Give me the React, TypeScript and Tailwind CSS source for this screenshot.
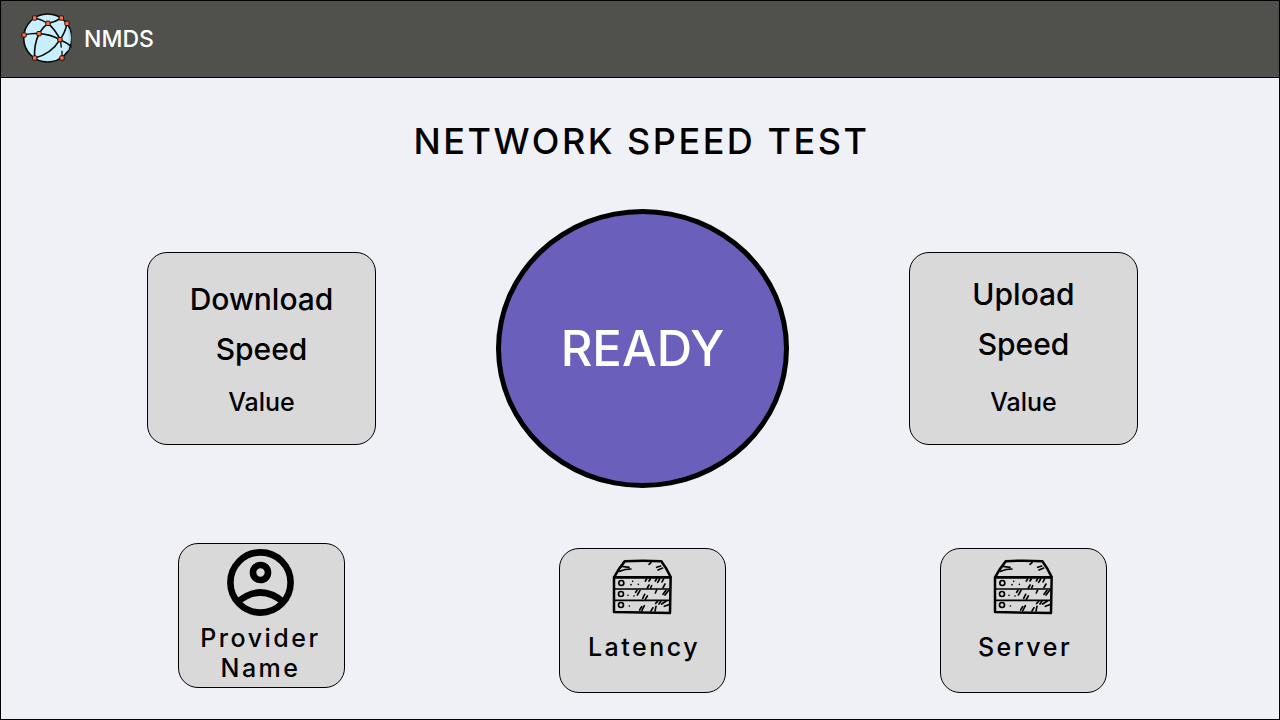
import React from "react";

function GlobeLogo() {
  const nodes = [
    [59, 39],
    [139, 39],
    [156, 55],
    [99, 55],
    [27, 90],
    [72, 86],
    [135, 104],
    [59, 159],
    [141, 159],
  ];
  return (
    <svg viewBox="18 18 156 156" className="size-[52px] shrink-0" aria-hidden="true">
      <clipPath id="globe-edge">
        <rect x="18" y="18" width="152" height="156" />
      </clipPath>
      <g clipPath="url(#globe-edge)" fill="none" stroke="#0a0a0a" strokeWidth="5">
        <circle cx="98" cy="99" r="72" fill="#c8effe" />
        <path d="M163 72Q172 100 161 134L154 140Q166 105 158 76Z" fill="#a9e4fb" stroke="none" />
        <path d="M59 39Q80 43 99 55Q121 51 139 39" />
        <path d="M27 90Q48 84 72 86Q82 67 99 55" />
        <path d="M72 86Q106 88 135 104Q155 112 172 127" />
        <path d="M72 86Q56 120 59 159Q108 148 135 104" />
        <path d="M99 55Q123 76 135 104Q151 82 156 55" />
        <path d="M137 110L139 128M141 137V156" strokeWidth="4" />
      </g>
      {nodes.map(([x, y]) => (
        <rect key={`${x}-${y}`} x={x - 6.5} y={y - 6.5} width="13" height="13" rx="3" fill="#ff7049" stroke="#1c0d08" strokeWidth="3" />
      ))}
    </svg>
  );
}

function AccountIcon() {
  return (
    <svg viewBox="0 0 67 67" className="size-[67px]" fill="none" stroke="#000" strokeWidth="6.6" aria-hidden="true">
      <circle cx="33.5" cy="33.5" r="30.1" />
      <circle cx="33.5" cy="23.5" r="7.5" />
      <path d="M10 53.5Q33.5 33.5 57 53.5" />
    </svg>
  );
}

function ServerIcon() {
  return (
    <svg viewBox="37 28 183 171" className="h-[57px] w-[61px]" fill="none" stroke="#000" strokeLinecap="round" strokeLinejoin="round" aria-hidden="true">
      <path d="M43 83Q56 58 75 35Q130 31 185 35Q201 56 213 82L211 190Q130 189 43 187Z" strokeWidth="7.5" />
      <path d="M45 83H211" strokeWidth="8" />
      <path d="M46 118H210M46 152H210" strokeWidth="5" />
      <g strokeWidth="5">
        <circle cx="65" cy="100" r="7.5" />
        <circle cx="64" cy="133" r="7.5" />
        <circle cx="64" cy="166" r="7.5" />
      </g>
      <path d="M99 95h.1M94 105h.1M116 104h.1M85 137h.1M103 139h.1M89 169h.1" strokeWidth="5" />
      <path
        d="M67 50L88 53M60 65Q76 58 94 58M154 39L148 44M171 53L183 49M175 61L189 55
        M137 94L141 88M148 94L152 88M171 87L167 94M180 88L174 98M192 87L187 97M148 106L143 115M156 108L153 115M196 103L190 114
        M108 128L112 122M121 122L113 136M135 134L129 146M143 139L137 149M171 121L167 130M199 122L190 134M207 122L196 136
        M126 171L120 181M134 168L126 184M160 174L154 184M169 170L166 184M174 155L168 161M184 154L178 163M200 154L186 163M207 165L194 170"
        strokeWidth="5"
      />
    </svg>
  );
}

function SpeedCard({ name, textClass, valueClass }: { name: string; textClass: string; valueClass: string }) {
  return (
    <section className={`h-[193px] w-[229px] rounded-[20px] border border-black bg-[#d9d9d9] px-8 text-center ${textClass}`}>
      <h2 className="text-[30px] leading-[50px]">{name} Speed</h2>
      <p className={`text-[25px] leading-[30px] ${valueClass}`}>Value</p>
    </section>
  );
}

function InfoCard({ label, icon, className, labelClass }: { label: string; icon: React.ReactNode; className: string; labelClass?: string }) {
  return (
    <section className={`flex h-[145px] w-[167px] flex-col items-center rounded-[20px] border border-black bg-[#d9d9d9] text-center ${className}`}>
      {icon}
      <h2 className={`text-[25px] leading-[30px] tracking-[2.5px] ${labelClass ?? ""}`}>{label}</h2>
    </section>
  );
}

export default function App() {
  return (
    <div className="flex min-h-screen flex-col border border-black bg-[#f0f1f6] font-['Inter','Liberation_Sans',sans-serif] font-medium text-black">
      <header className="flex h-[77px] items-center gap-[11px] border-b border-black bg-[#50504d] px-5 pb-1">
        <GlobeLogo />
        <span className="pt-1 text-[23px] text-[#fffffb]">NMDS</span>
      </header>
      <main className="flex-1 pb-6">
        <h1 className="pt-[41px] pl-[3px] text-center text-4xl leading-[44px] tracking-[2.5px]">NETWORK SPEED TEST</h1>
        <div className="mt-[46px] grid grid-cols-3 items-center justify-items-center pr-[65px] pl-[70px]">
          <SpeedCard name="Download" textClass="pt-[21px]" valueClass="mt-[13px]" />
          <button type="button" className="h-[279px] w-[293px] rounded-[50%] border-5 border-black bg-[#6b5fbc] text-[49px] text-white">
            READY
          </button>
          <SpeedCard name="Upload" textClass="pt-4" valueClass="mt-[18px]" />
        </div>
        <div className="mt-[55px] grid grid-cols-3 items-start justify-items-center pr-[65px] pl-[70px]">
          <InfoCard label="Provider Name" icon={<AccountIcon />} className="gap-[7px] pt-[5px] pr-[18px] pl-4" />
          <InfoCard label="Latency" icon={<ServerIcon />} className="mt-[5px] gap-4 pt-2.5" labelClass="pl-[3px]" />
          <InfoCard label="Server" icon={<ServerIcon />} className="mt-[5px] gap-4 pt-2.5" labelClass="pl-[3px]" />
        </div>
      </main>
    </div>
  );
}
